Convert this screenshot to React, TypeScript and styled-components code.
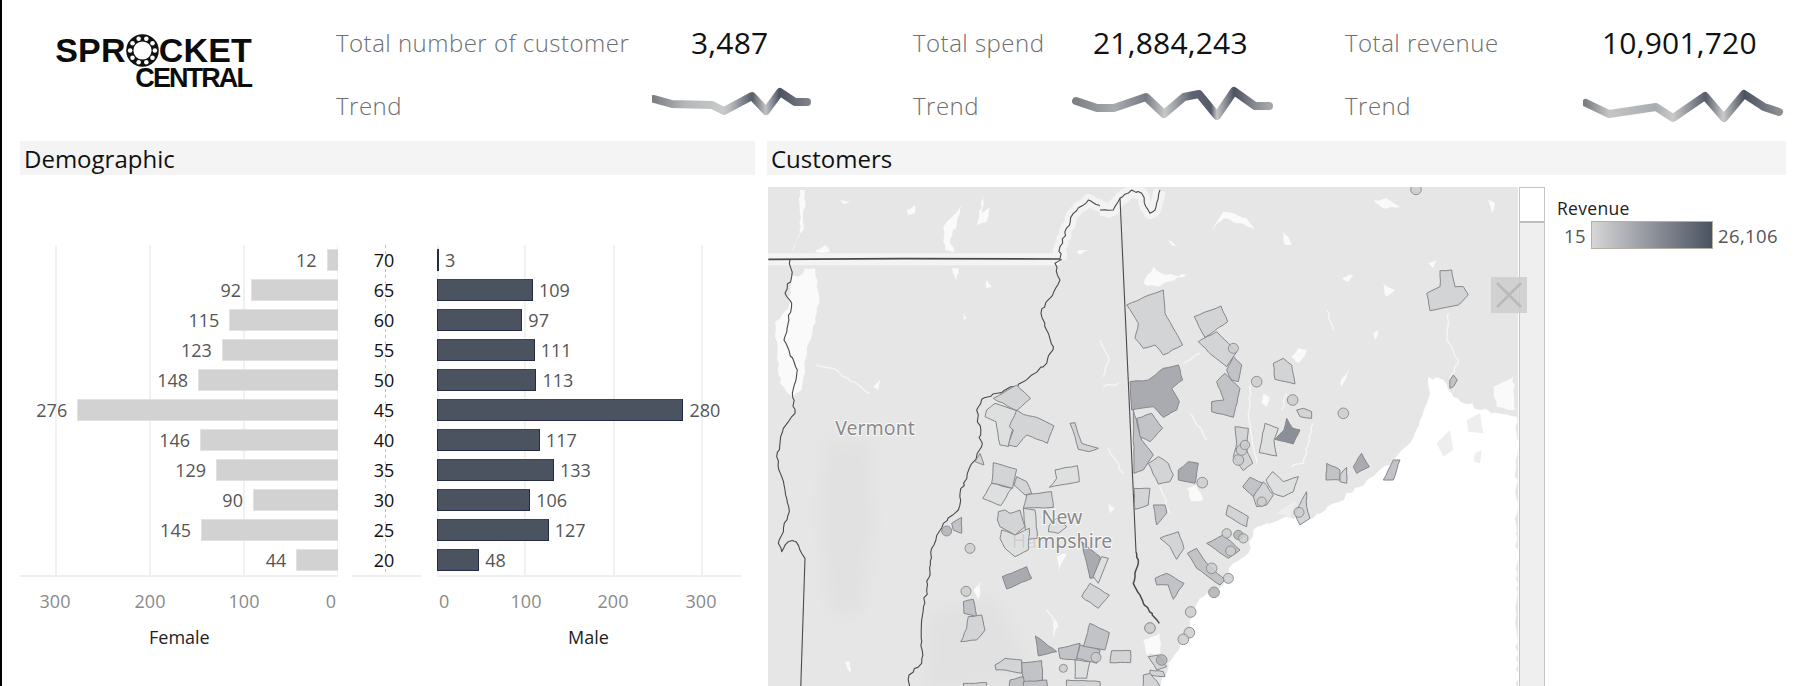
import React from "react";
import styled, { createGlobalStyle } from "styled-components";

const Global = createGlobalStyle`
  html, body { margin: 0; padding: 0; background: #fff; overflow: hidden; }
  body { font-family: "Open Sans", "Noto Sans", sans-serif; }
`;

const Page = styled.div`
  width: 1798px;
  height: 686px;
  box-sizing: border-box;
  border-left: 2px solid #000;
  display: flex;
  flex-direction: column;
  overflow: hidden;
`;
const Header = styled.header`
  height: 141px;
  display: flex;
  flex: none;
`;
const LogoBox = styled.div`
  width: 334px;
  box-sizing: border-box;
  padding: 34px 0 0 55px;
`;
const Logo = styled.div`
  width: 195px;
  display: flex;
  flex-direction: column;
  align-items: flex-end;
  font-family: "Liberation Sans", Arial, sans-serif;
  font-weight: 700;
  color: #0c0c0c;
`;
const LogoTop = styled.div`
  display: flex;
  align-items: center;
  font-size: 34px;
  line-height: 33px;
  height: 33px;
  letter-spacing: 0.2px;
`;
const LogoBottom = styled.div`
  font-size: 27px;
  line-height: 22px;
  height: 22px;
  letter-spacing: -1.9px;
  padding-right: 1px;
`;
const Kpi = styled.section<{ $w: number; $col: number }>`
  width: ${(p) => p.$w}px;
  flex: none;
  box-sizing: border-box;
  padding-top: 11px;
  display: grid;
  grid-template-columns: ${(p) => p.$col}px 1fr;
  grid-template-rows: 62px 64px;
  align-items: center;
`;
const KpiLabel = styled.div`
  font-size: 24px;
  font-weight: 300;
  color: #6e6e6e;
  letter-spacing: 0.48px;
  white-space: nowrap;
`;
const KpiValue = styled.div<{ $pad: number }>`
  padding-left: ${(p) => p.$pad}px;
  font-size: 30px;
  color: #111;
  letter-spacing: 0.2px;
  white-space: nowrap;
`;
const Panels = styled.main`
  flex: 1;
  min-height: 0;
  display: grid;
  grid-template-columns: 735px 1019px;
  column-gap: 12px;
  padding-left: 18px;
`;
const Panel = styled.section`
  display: flex;
  flex-direction: column;
  min-height: 0;
`;
const Title = styled.h2`
  margin: 0;
  flex: none;
  height: 34px;
  box-sizing: border-box;
  background: #f4f4f4;
  padding: 1px 0 0 4px;
  font-size: 24px;
  font-weight: 400;
  line-height: 33px;
  color: #111;
`;
const Pyramid = styled.div`
  padding-top: 70px;
  display: grid;
  grid-template-columns: 318px 69px 306px;
  column-gap: 14px;
`;
const Side = styled.div<{ $pad?: number }>`
  padding-left: ${(p) => p.$pad ?? 0}px;
`;
const Plot = styled.div<{ $lines: number[] }>`
  height: 330px;
  border-bottom: 2px solid #efefef;
  background-repeat: no-repeat;
  background-size: 2px 100%;
  background-image: ${(p) =>
    p.$lines.map(() => "linear-gradient(#f1f1f1,#f1f1f1)").join(",")};
  background-position: ${(p) => p.$lines.map((x) => `${x}px 0`).join(",")};
`;
const MiddlePlot = styled.div`
  height: 330px;
  border-bottom: 2px solid #efefef;
  background: repeating-linear-gradient(#c4c4c4 0 3px, transparent 3px 6px) 33px 0 / 1px 100% no-repeat;
`;
const Row = styled.div<{ $end?: boolean }>`
  height: 30px;
  display: flex;
  align-items: center;
  justify-content: ${(p) => (p.$end ? "flex-end" : "flex-start")};
  gap: ${(p) => (p.$end ? 10 : 6)}px;
  font-size: 18px;
  color: #555;
  line-height: 30px;
`;
const FemaleBar = styled.div`
  height: 22px;
  box-sizing: border-box;
  background: #d2d2d2;
  border: 1px solid #e2e2e2;
  border-right: 0;
`;
const MaleBar = styled.div`
  height: 22px;
  box-sizing: border-box;
  background: #4b5260;
  border-left: 1px solid #232c44;
  border-right: 1px solid #232c44;
  border-bottom: 1px solid #232c44;
  border-top: 1px solid #3c4354;
`;
const Age = styled.div`
  height: 30px;
  line-height: 30px;
  text-align: center;
  font-size: 18px;
  color: #111;
  margin-left: -5px;
`;
const Axis = styled.div<{ $cols: string }>`
  margin-top: 11px;
  display: grid;
  grid-template-columns: ${(p) => p.$cols};
  font-size: 18px;
  line-height: 26px;
  color: #8a8a8a;
`;
const Tick = styled.div<{ $at: "l" | "c" | "r" }>`
  text-align: ${(p) => (p.$at === "l" ? "left" : p.$at === "r" ? "right" : "center")};
  padding: ${(p) => (p.$at === "l" ? "0 0 0 2px" : p.$at === "r" ? "0 2px 0 0" : "0")};
`;
const SideName = styled.div<{ $pad: number }>`
  margin-top: 11px;
  padding-left: ${(p) => p.$pad}px;
  font-size: 18px;
  line-height: 25px;
  color: #222;
`;
const CustomerBody = styled.div`
  flex: 1;
  min-height: 0;
  display: flex;
  padding: 12px 0 0 1px;
`;
const MapWrap = styled.div`
  position: relative;
  width: 777px;
  height: 499px;
  flex: none;
  display: flex;
`;
const MapSvg = styled.svg`
  display: block;
  width: 750px;
  height: 499px;
  flex: none;
  margin-right: 1px;
  background: #e6e6e6;
`;
const Scroll = styled.div`
  width: 26px;
  box-sizing: border-box;
  background: #efefef;
  border: 1px solid #c4c4c4;
  border-bottom: 0;
  flex: none;
`;
const Thumb = styled.div`
  height: 35px;
  box-sizing: border-box;
  background: #fff;
  border-bottom: 2px solid #bdbdbd;
`;
const CloseBtn = styled.div`
  position: absolute;
  left: 723px;
  top: 90px;
  width: 36px;
  height: 36px;
  background: rgba(205, 205, 205, 0.85);
  display: flex;
  align-items: center;
  justify-content: center;
`;
const Legend = styled.aside`
  padding: 10px 0 0 12px;
  display: flex;
  flex-direction: column;
`;
const LegendTitle = styled.div`
  font-size: 17.5px;
  line-height: 22px;
  color: #222;
  letter-spacing: 0.3px;
`;
const LegendRow = styled.div`
  display: flex;
  align-items: center;
  margin-top: 2px;
  font-size: 18.5px;
  letter-spacing: 0.4px;
  color: #555;
  gap: 5px;
`;
const LegendMin = styled.span`
  padding-left: 7px;
`;
const Ramp = styled.div`
  width: 122px;
  height: 28px;
  box-sizing: border-box;
  border: 1px solid #b4b2a6;
  background: linear-gradient(90deg, #d6d6d6, #8f939b 50%, #4b5260);
`;
const SparkSvg = styled.svg`
  display: block;
`;
const Line = styled.polyline`
  fill: none;
  stroke-linejoin: round;
  stroke-linecap: round;
`;
const TONES = ["#dedfdf", "#d3d4d5", "#c2c3c6", "#a9abb0", "#8b8f97"];
const Town = styled.polygon<{ $t: number }>`
  fill: ${(p) => TONES[p.$t]};
  stroke: #85878b;
  stroke-width: 1px;
  vector-effect: non-scaling-stroke;
  stroke-linejoin: round;
`;
const Dot = styled.circle<{ $dark?: boolean }>`
  fill: ${(p) => (p.$dark ? "#aeb0b3" : "#cbcccd")};
  fill-opacity: 0.85;
  stroke: #8f9194;
  stroke-width: 1px;
  vector-effect: non-scaling-stroke;
`;
const Lake = styled.polygon<{ $soft?: boolean; $pure?: boolean }>`
  fill: ${(p) => (p.$pure ? "#fff" : p.$soft ? "#eeeeee" : "#fafafa")};
`;
const Shade = styled.polygon`
  fill: #e1e1e1;
`;
const River = styled.polyline`
  fill: none;
  stroke: #f6f6f6;
  stroke-width: 4;
  stroke-linejoin: round;
`;
const Halo = styled.polyline`
  fill: none;
  stroke: #f3f3f3;
  stroke-width: 36;
  stroke-linejoin: round;
`;
const Border = styled.polyline<{ $w?: number }>`
  fill: none;
  stroke: #4a4a4a;
  stroke-width: ${(p) => p.$w ?? 1.1}px;
  vector-effect: non-scaling-stroke;
  stroke-linejoin: round;
`;
const PlaceLabel = styled.text`
  font-family: "Noto Sans", "Open Sans", sans-serif;
  font-size: 19.5px;
  fill: #8a8a8a;
  stroke: #fff;
  stroke-width: 2px;
  stroke-opacity: 0.75;
  paint-order: stroke;
  text-anchor: middle;
`;
const FadedLetters = styled.tspan`
  fill-opacity: 0.25;
  stroke-opacity: 0.15;
`;

const noise = (i: number) => {
  const s = Math.sin(i * 12.9898) * 43758.5453;
  return (s - Math.floor(s)) * 2 - 1;
};
const wiggle = (pts: string, step: number, amp: number, closed = false, seed = 1) => {
  const p = pts.trim().split(/\s+/).map((q) => q.split(",").map(Number));
  if (closed) p.push(p[0]);
  const out: string[] = [];
  let n = seed * 37;
  for (let i = 0; i < p.length - 1; i++) {
    const [x0, y0] = p[i];
    const [x1, y1] = p[i + 1];
    const len = Math.hypot(x1 - x0, y1 - y0);
    const k = Math.max(1, Math.round(len / step));
    for (let j = 0; j < k; j++) {
      const t = j / k;
      const off = j === 0 ? 0 : 1;
      out.push(
        `${(x0 + (x1 - x0) * t + off * amp * noise(n++)).toFixed(1)},${(y0 + (y1 - y0) * t + off * amp * noise(n++)).toFixed(1)}`
      );
    }
  }
  if (!closed) out.push(p[p.length - 1].join(","));
  return out.join(" ");
};

const SPROCKET_BALLS = Array.from({ length: 10 }, (_, i) => {
  const a = (i / 10) * Math.PI * 2;
  return [16 + 12 * Math.cos(a), 16 + 12 * Math.sin(a)];
});

const ages = [70, 65, 60, 55, 50, 45, 40, 35, 30, 25, 20];
const female = [12, 92, 115, 123, 148, 276, 146, 129, 90, 145, 44];
const male = [3, 109, 97, 111, 113, 280, 117, 133, 106, 127, 48];

type Spark = {
  id: string;
  pts: number[][];
  stops: [number, string][];
};
const sparks: Spark[] = [
  {
    id: "s1",
    pts: [[654,100],[672,105],[712,106],[724,112],[752,97],[766,112],[780,93],[795,103],[807,103]],
    stops: [[0,"#7c7f84"],[0.2,"#b4b6b8"],[0.45,"#c9caca"],[0.5,"#b8babc"],[0.64,"#565c69"],[0.73,"#c2c3c5"],[0.82,"#4b5260"],[1,"#7d8087"]],
  },
  {
    id: "s2",
    pts: [[1076,102],[1097,109],[1114,109],[1146,98],[1164,115],[1184,98],[1199,95],[1217,117],[1234,92],[1255,107],[1269,107]],
    stops: [[0,"#7c7f84"],[0.2,"#a9acaf"],[0.36,"#777b83"],[0.46,"#c6c7c8"],[0.6,"#5d6370"],[0.7,"#555b68"],[0.73,"#c5c6c7"],[0.82,"#4b5260"],[0.94,"#8f9298"],[1,"#a3a5a8"]],
  },
  {
    id: "s3",
    pts: [[1586,104],[1609,115],[1656,108],[1673,119],[1705,97],[1724,119],[1744,95],[1764,108],[1779,113]],
    stops: [[0,"#7c7f84"],[0.12,"#c4c5c6"],[0.36,"#a9acaf"],[0.45,"#cacaca"],[0.62,"#565c69"],[0.71,"#c9caca"],[0.82,"#4b5260"],[1,"#8c8f95"]],
  },
];

const townsA: [string, number][] = [
  ["700,655 770,615 812,655 770,692", 1],
  ["680,690 705,670 770,692 745,800 720,795 708,725 675,710", 0],
  ["790,703 830,712 882,738 862,790 800,765 770,800 745,795 760,750 748,740 770,690", 1],
  ["930,730 945,728 965,790 1015,805 985,815 955,808 945,770", 1],
  ["645,845 660,820 672,855", 1],
  ["700,848 770,868 758,925 695,910", 1],
  ["695,910 755,925 722,977 668,955", 0],
  ["770,890 800,905 815,940 795,945 762,915", 1],
  ["815,942 875,935 880,982 790,985 800,945", 1],
  ["885,870 952,857 958,905 868,922 890,895", 0],
  ["575,1030 605,1012 605,1060 580,1050", 2],
  ["790,985 825,990 832,1075 800,1080", 0],
  ["715,995 735,990 750,1000 780,990 795,1040 765,1065 720,1040 712,1020", 1],
  ["725,1050 765,1065 808,1045 805,1110 765,1130 735,1105 720,1075", 0],
  ["868,1035 890,1015 920,1040 895,1060 865,1055", 0],
  ["965,1085 1020,1130 1015,1190 990,1195 975,1130", 3],
  ["1025,1130 1045,1135 1015,1210 1000,1190", 0],
  ["990,1210 1048,1245 1015,1285 965,1250", 1],
  ["727,1190 800,1160 815,1195 740,1227", 3],
  ["610,1265 640,1258 650,1310 612,1300", 2],
  ["625,1310 665,1305 675,1350 650,1380 602,1385 620,1345", 1],
  ["826,1368 890,1415 835,1428", 3],
  ["895,1405 960,1390 950,1440 900,1435", 2],
  ["990,1330 1048,1358 1035,1410 970,1400", 2],
  ["960,1395 1020,1410 1010,1450 950,1435", 2],
  ["1055,1412 1112,1412 1112,1448 1050,1448", 1],
  ["705,1455 735,1435 785,1440 785,1480 735,1470 708,1470", 1],
  ["785,1448 845,1442 848,1500 790,1515", 2],
  ["945,1440 990,1445 980,1495 945,1495", 0],
  ["610,1510 680,1508 680,1530 612,1530", 1],
  ["750,1500 790,1490 795,1530 745,1530", 2],
  ["790,1505 860,1500 865,1530 790,1530", 2],
  ["920,1500 1020,1505 1020,1530 920,1530", 1],
];
const townsB: [string, number][] = [
  ["80,375 135,350 190,330 195,400 248,495 190,525 165,495 130,505 105,475 115,430", 1],
  ["283,410 363,378 383,425 315,472", 1],
  ["295,485 350,455 410,515 380,560 335,525", 1],
  ["350,605 375,580 420,625 400,712 335,695 335,665 372,660", 2],
  ["380,570 400,530 425,555 415,605 395,600", 2],
  ["90,605 145,600 190,565 235,555 248,600 215,625 238,665 230,690 190,712 160,680 95,690", 3],
  ["100,690 125,780 160,825 130,870 102,880", 2],
  ["110,715 155,700 188,745 150,785 120,770", 2],
  ["145,850 175,830 205,850 220,885 210,905 175,912", 1],
  ["235,870 265,845 295,850 285,910 235,900", 3],
  ["102,925 150,925 145,975 105,988", 1],
  ["160,975 195,975 200,1000 170,1035", 2],
  ["405,740 445,745 440,810 458,850 430,872 400,830 410,790", 1],
  ["495,730 535,745 522,780 530,828 478,818", 0],
  ["560,715 578,745 600,750 580,792 525,778 552,750", 4],
  ["520,550 550,535 575,555 585,612 525,598", 1],
  ["590,690 610,685 635,695 635,715 600,710", 1],
  ["980,340 1020,320 1020,272 1055,270 1065,320 1090,320 1105,345 1075,375 990,392", 1],
  ["1050,600 1060,585 1072,600 1060,620 1050,625", 2],
  ["428,920 450,892 490,910 460,950", 2],
  ["498,900 518,875 550,905 595,890 580,935 550,950 520,940", 0],
  ["460,950 490,905 520,945 500,975 470,980", 1],
  ["585,1000 620,935 620,980 630,1015 600,1035", 1],
  ["680,850 720,870 720,900 678,900", 2],
  ["720,885 740,862 740,910 720,905", 1],
  ["760,860 785,820 808,860 770,880", 3],
  ["850,900 880,840 900,840 880,900", 2],
  ["378,1005 385,975 445,1010 440,1040 410,1025", 1],
  ["320,1090 370,1065 420,1110 385,1135", 2],
  ["262,1120 290,1105 320,1150 375,1200 360,1215 290,1165", 2],
  ["165,1195 200,1180 252,1210 220,1258 205,1215 170,1215", 2],
  ["180,1075 235,1055 252,1105 230,1138 210,1100", 1],
  ["145,1430 175,1425 200,1460 170,1470", 1],
  ["150,1470 190,1475 195,1490 150,1485", 1],
  ["130,1485 150,1480 190,1530 130,1530", 1],
];
const dotsA: [number, number, number, boolean?][] = [
  [560,1053,15,true],[630,1105,15],[618,1234,15],[1170,1344,15],[910,1465,12],[1008,1432,15],
];
const dotsB: [number, number, number, boolean?][] = [
  [948,28,16],[400,505,15],[470,605,16],[578,660,16],[730,700,16],[307,908,16],[415,840,16],
  [425,810,16],[435,795,14],[485,965,14],[597,997,15],[380,1060,14],[415,1065,14,true],[430,1075,14],
  [392,1113,15],[335,1165,16],[385,1195,15],[342,1237,16,true],[272,1296,16],[268,1358,16],
  [250,1378,16],[150,1344,16],[185,1440,16,true],
];
const lakesA = [
  "120,30 135,30 130,150 100,200 95,215 120,165",
  "550,140 605,75 590,130 570,190 585,215 555,210",
  "440,90 465,75 465,100 445,105",
  "650,135 670,40 665,100 690,80 680,125",
  "170,210 195,195 210,215 165,215",
  "95,285 115,290 135,265 165,265 178,370 140,510 125,630 100,650 60,610 45,425 85,385",
  "575,265 595,265 590,300",
  "680,300 695,320 680,325",
  "610,400 620,415 612,420",
  "340,620 360,600 355,630",
  "1045,970 1065,985 1050,1000",
  "890,1130 920,1120 895,1175",
  "640,1230 665,1205 655,1260",
  "880,1310 895,1340 880,1360",
  "255,1445 270,1445 270,1480",
  "1150,1380 1200,1360 1200,1420 1160,1425",
  "240,60 270,65 250,72",
  "950,215 985,210 960,225",
];
const lakesB = [
  "335,150 370,95 440,115 465,150 420,130 370,115",
  "820,60 860,55 900,80 850,85",
  "550,150 575,195 555,195",
  "725,295 760,285 745,305",
  "850,310 885,330 860,350",
  "160,260 195,285 260,285 175,320 130,310",
  "205,180 235,200 215,195",
  "490,640 510,650 500,680 485,670",
  "595,505 620,510 595,550 575,530",
  "720,610 750,565 725,620",
  "820,460 835,450 825,480",
  "260,925 290,915 310,960 275,965",
  "1165,60 1185,70 1175,100",
  "985,250 1010,240 1000,265",
  "1000,640 1030,620 1020,680",
  "1180,620 1240,590 1245,690 1190,680",
];
const riversA = [
  "1020,480 1048,540 1030,590",
  "1030,620 1075,610",
  "170,555 230,570 330,640",
  "860,1290 890,1340 880,1370",
  "1045,805 1090,880",
];
const riversB = [
  "680,390 700,450",
  "640,730 610,850 575,860",
  "455,600 445,700 470,850",
  "300,520 250,550",
  "1045,400 1040,480 1075,540 1050,600",
  "270,700 320,780",
  "180,920 210,1000",
  "560,640 545,690",
];

const borderRiver = wiggle(
  "905,238 885,250 900,300 843,400 880,500 860,550 790,605 760,620 665,658 650,690 665,800 630,860 600,940 595,990 550,1030 515,1105 500,1230 485,1320 485,1450 447,1485 447,1530",
  13, 4.5, false, 2
);
const borderWest = wiggle(
  "90,238 95,290 75,340 95,370 72,480 112,570 97,640 105,700 70,745 50,830 75,930 88,995 55,1090 65,1115 85,1085 108,1085 135,1135",
  13, 3.5, false, 3
);
const borderNorth = wiggle("900,237 900,200 940,100 985,60 1045,95 1080,60 1115,30 1150,45", 12, 4, false, 4);
const borderNorthB = wiggle("0,90 40,90 60,55 95,30 125,40 150,100 165,90 180,30", 12, 4, false, 5);
const borderLower = wiggle("108,1115 115,1140 100,1210 130,1270 178,1330", 10, 3, false, 6);

export default function App() {
  return (
    <Page>
      <Global />
      <Header>
        <LogoBox>
          <Logo>
            <LogoTop>
              SPR
              <svg width="33" height="33" viewBox="0 0 32 32" aria-hidden="true">
                <circle cx="16" cy="16" r="15.8" fill="#111" />
                <circle cx="16" cy="16" r="8.8" fill="#fff" />
                {SPROCKET_BALLS.map(([x, y], i) => (
                  <circle key={i} cx={x} cy={y} r="2.2" fill="#fff" />
                ))}
              </svg>
              CKET
            </LogoTop>
            <LogoBottom>CENTRAL</LogoBottom>
          </Logo>
        </LogoBox>
        {[
          { w: 577, col: 316, label: "Total number of customer", value: "3,487", pad: 39, x: 652, s: sparks[0], sw: 260 },
          { w: 432, col: 159, label: "Total spend", value: "21,884,243", pad: 21, x: 1072, s: sparks[1], sw: 273 },
          { w: 453, col: 238, label: "Total revenue", value: "10,901,720", pad: 19, x: 1583, s: sparks[2], sw: 215 },
        ].map((k) => (
          <Kpi key={k.label} $w={k.w} $col={k.col}>
            <KpiLabel>{k.label}</KpiLabel>
            <KpiValue $pad={k.pad}>{k.value}</KpiValue>
            <KpiLabel>Trend</KpiLabel>
            <SparkSvg width={k.sw} height="44" viewBox={`${k.x} 84 ${k.sw} 44`}>
              <defs>
                <linearGradient
                  id={k.s.id}
                  gradientUnits="userSpaceOnUse"
                  x1={k.s.pts[0][0]}
                  y1="0"
                  x2={k.s.pts[k.s.pts.length - 1][0]}
                  y2="0"
                >
                  {k.s.stops.map(([o, c]) => (
                    <stop key={o} offset={o} stopColor={c} />
                  ))}
                </linearGradient>
              </defs>
              <Line
                points={k.s.pts.map((p) => p.join(",")).join(" ")}
                stroke={`url(#${k.s.id})`}
                strokeWidth="8"
              />
            </SparkSvg>
          </Kpi>
        ))}
      </Header>
      <Panels>
        <Panel>
          <Title>Demographic</Title>
          <Pyramid>
            <Side>
              <Plot $lines={[35, 129, 223, 317]}>
                {female.map((v, i) => (
                  <Row key={ages[i]} $end>
                    {v}
                    <FemaleBar style={{ width: v * 0.945 }} />
                  </Row>
                ))}
              </Plot>
              <Axis $cols="5px 60px 35px 60px 34px 60px 64px">
                <span />
                <Tick $at="c">300</Tick>
                <span />
                <Tick $at="c">200</Tick>
                <span />
                <Tick $at="c">100</Tick>
                <Tick $at="r">0</Tick>
              </Axis>
              <SideName $pad={129}>Female</SideName>
            </Side>
            <Side>
              <MiddlePlot>
                {ages.map((a) => (
                  <Age key={a}>{a}</Age>
                ))}
              </MiddlePlot>
            </Side>
            <Side $pad={2}>
              <Plot $lines={[0, 87, 176, 264]}>
                {male.map((v, i) => (
                  <Row key={ages[i]}>
                    <MaleBar style={{ width: v < 5 ? 2 : v * 0.88 }} />
                    {v}
                  </Row>
                ))}
              </Plot>
              <Axis $cols="59px 60px 27px 60px 28px 60px">
                <Tick $at="l">0</Tick>
                <Tick $at="c">100</Tick>
                <span />
                <Tick $at="c">200</Tick>
                <span />
                <Tick $at="c">300</Tick>
              </Axis>
              <SideName $pad={131}>Male</SideName>
            </Side>
          </Pyramid>
        </Panel>
        <Panel>
          <Title>Customers</Title>
          <CustomerBody>
            <MapWrap>
              <MapSvg viewBox="0 0 750 499">
                <defs>
                  <filter id="softWide" x="-20%" y="-20%" width="140%" height="140%">
                    <feGaussianBlur stdDeviation="22" />
                  </filter>
                  <filter id="soft" x="-5%" y="-5%" width="110%" height="110%">
                    <feGaussianBlur stdDeviation="2.2" />
                  </filter>
                </defs>
                <g transform="translate(-8 -7) scale(.33333)">
                  <g filter="url(#softWide)">
                    <Shade points="200,790 330,780 340,1050 300,1300 210,1300 180,1000" />
                    <Shade points="500,1300 700,1250 830,1500 500,1530" />
                  </g>
                  <g filter="url(#soft)">
                    <Halo points="0,238 900,238" />
                    <Halo points={borderNorth} />
                    {lakesA.map((p, i) => (
                      <Lake key={p} points={wiggle(p, 14, 4, true, i + 10)} />
                    ))}
                    {riversA.map((p, i) => (
                      <River key={p} points={wiggle(p, 14, 4, false, i + 40)} />
                    ))}
                  </g>
                  <Border $w={1.6} points="25,238 430,236 900,237" />
                  <Border points={borderRiver} />
                  <Border points={borderWest} />
                  <Border points="135,1135 122,1530" />
                  <Border points={borderNorth} />
                  {townsA.map(([p, t], i) => (
                    <Town key={p} points={wiggle(p, 16, 1.3, true, i + 60)} $t={t} />
                  ))}
                  {dotsA.map(([x, y, r, d]) => (
                    <Dot key={`${x}-${y}`} cx={x} cy={y} r={r} $dark={d} />
                  ))}
                </g>
                <g transform="translate(332 -7) scale(.33333)">
                  <g filter="url(#soft)">
                    <Halo points={borderNorthB} />
                    {lakesB.map((p, i) => (
                      <Lake key={p} points={wiggle(p, 14, 4, true, i + 100)} />
                    ))}
                    {riversB.map((p, i) => (
                      <River key={p} points={wiggle(p, 14, 4, false, i + 130)} />
                    ))}
                    <Lake
                      $pure
                      points={wiggle(
                        "1250,710 1140,690 1060,650 1030,600 985,590 990,640 960,720 930,790 880,840 830,880 780,920 700,970 640,1015 560,1010 500,1030 460,1050 445,1120 400,1150 370,1215 300,1255 270,1320 240,1400 205,1450 180,1530 1252,1530",
                        16, 6, true, 150
                      )}
                    />
                    <Lake $soft points="1010,790 1050,750 1060,810 1030,830" />
                    <Lake $soft points="1125,820 1145,810 1140,850 1122,845" />
                    <Lake $soft points="1100,720 1140,700 1150,760 1105,755" />
                    <Lake $soft points="530,1000 590,960 570,1010" />
                  </g>
                  <Border points={borderNorthB} />
                  <Border points="60,55 108,1115" />
                  <Border $w={1.5} points={borderLower} />
                  {townsB.map(([p, t], i) => (
                    <Town key={p} points={wiggle(p, 16, 1.3, true, i + 200)} $t={t} />
                  ))}
                  {dotsB.map(([x, y, r, d]) => (
                    <Dot key={`${x}-${y}`} cx={x} cy={y} r={r} $dark={d} />
                  ))}
                </g>
                <PlaceLabel x="107" y="248">Vermont</PlaceLabel>
                <PlaceLabel x="294" y="337">New</PlaceLabel>
                <PlaceLabel x="294" y="361">
                  <FadedLetters>Ha</FadedLetters>mpshire
                </PlaceLabel>
              </MapSvg>
              <Scroll>
                <Thumb />
              </Scroll>
              <CloseBtn>
                <svg width="28" height="28" viewBox="0 0 28 28" aria-hidden="true">
                  <path d="M2 2 26 26M26 2 2 26" stroke="#b9b9b9" strokeWidth="2.5" fill="none" />
                </svg>
              </CloseBtn>
            </MapWrap>
            <Legend>
              <LegendTitle>Revenue</LegendTitle>
              <LegendRow>
                <LegendMin>15</LegendMin>
                <Ramp />
                <span>26,106</span>
              </LegendRow>
            </Legend>
          </CustomerBody>
        </Panel>
      </Panels>
    </Page>
  );
}
